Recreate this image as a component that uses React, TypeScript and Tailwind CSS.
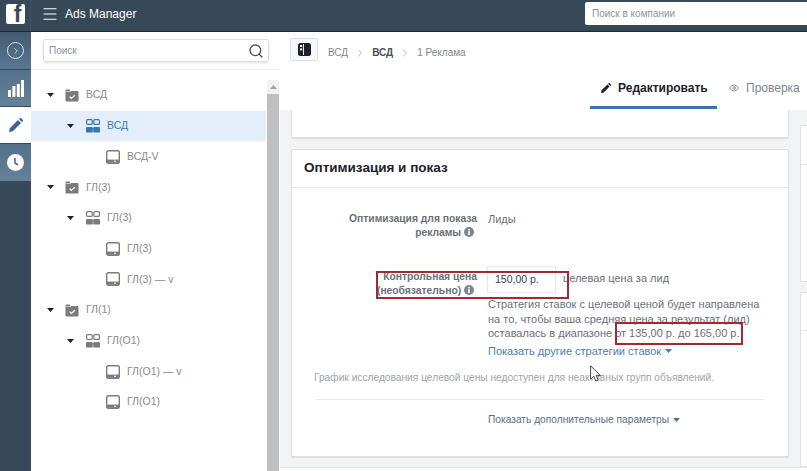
import { Eye, Search, ChevronRight, Menu } from "lucide-react";

const font = "font-['Liberation_Sans',Arial,sans-serif]";

function Caret({ className = "text-[#1d2129]" }: { className?: string }) {
  return (
    <svg width="7" height="4" viewBox="0 0 7 4" className={className}>
      <path d="M0 0h7L3.5 4z" fill="currentColor" />
    </svg>
  );
}

function FolderIcon() {
  return (
    <svg width="14" height="13" viewBox="0 0 14 13">
      <path d="M0.5 1.5a1 1 0 0 1 1-1h3l1 1.6h7a1 1 0 0 1 1 1v8.4a1 1 0 0 1-1 1h-11a1 1 0 0 1-1-1z" fill="#7b7b7b" />
      <path d="M1 2.9h5v-.6H1z" fill="#fff" />
      <path d="M4.6 7.6l1.8 1.8 3.4-3.2" stroke="#fff" strokeWidth="1.3" fill="none" />
    </svg>
  );
}

function SetIcon({ color }: { color: string }) {
  return (
    <svg width="14" height="14" viewBox="0 0 14 14" style={{ color }}>
      <rect x="0.6" y="0.6" width="5.6" height="4.8" rx="1" fill="none" stroke="currentColor" strokeWidth="1.2" />
      <rect x="7.8" y="0.6" width="5.6" height="4.8" rx="1" fill="none" stroke="currentColor" strokeWidth="1.2" />
      <rect x="0" y="8" width="6.8" height="5.6" rx="1.2" fill="currentColor" />
      <rect x="7.2" y="8" width="6.8" height="5.6" rx="1.2" fill="currentColor" />
    </svg>
  );
}

function AdIcon() {
  return (
    <svg width="14" height="14" viewBox="0 0 14 14">
      <rect x="0.7" y="0.7" width="12.6" height="12.6" rx="1.6" fill="none" stroke="#7b7b7b" strokeWidth="1.4" />
      <rect x="1" y="9.6" width="12" height="3.2" fill="#7b7b7b" />
      <rect x="8" y="10.7" width="2" height="1" fill="#fff" />
    </svg>
  );
}

function InfoDot() {
  return (
    <svg width="10" height="10" viewBox="0 0 10 10" className="mr-[3px] inline align-[-1px]">
      <circle cx="5" cy="5" r="5" fill="#7f858d" />
      <rect x="4.2" y="4.2" width="1.6" height="3.8" fill="#fff" />
      <rect x="4.2" y="2" width="1.6" height="1.5" fill="#fff" />
    </svg>
  );
}

function PencilGlyph({ size, color }: { size: number; color: string }) {
  return (
    <svg width={size} height={size} viewBox="0 0 14 14">
      <path d="M0 14l.8-3.8 8.2-8.2 3 3-8.2 8.2zM9.9 1.1l.7-.7a1.3 1.3 0 0 1 1.8 0l1.2 1.2a1.3 1.3 0 0 1 0 1.8l-.7.7z" fill={color} />
    </svg>
  );
}

type Row = { level: 0 | 1 | 2; label: string; active?: boolean };

const rows: Row[] = [
  { level: 0, label: "ВСД" },
  { level: 1, label: "ВСД", active: true },
  { level: 2, label: "ВСД-V" },
  { level: 0, label: "ГЛ(3)" },
  { level: 1, label: "ГЛ(3)" },
  { level: 2, label: "ГЛ(3)" },
  { level: 2, label: "ГЛ(3) — v" },
  { level: 0, label: "ГЛ(1)" },
  { level: 1, label: "ГЛ(О1)" },
  { level: 2, label: "ГЛ(О1) — v" },
  { level: 2, label: "ГЛ(О1)" },
];

function TreeRow({ row }: { row: Row }) {
  const pad = row.level === 0 ? "pl-[16px]" : row.level === 1 ? "pl-[36px]" : "pl-[75px]";
  return (
    <div className={`flex h-[30.7px] items-center ${pad} ${row.active ? "bg-[#e3eefa] text-[#3b7ab8]" : "text-[#8a8a8a]"}`}>
      {row.level < 2 && <Caret />}
      <span className={row.level === 2 ? "" : row.level === 0 ? "ml-[11px]" : "ml-[12px]"}>
        {row.level === 0 && <FolderIcon />}
        {row.level === 1 && <SetIcon color={row.active ? "#2f77b5" : "#7b7b7b"} />}
        {row.level === 2 && <AdIcon />}
      </span>
      <span className="ml-[7px] text-[10.5px]">{row.label}</span>
    </div>
  );
}

function Sidebar() {
  return (
    <div className="flex w-[31px] shrink-0 flex-col bg-[#374858]">
      <div className="flex h-[37px] items-center justify-center bg-gradient-to-b from-[#435b72] to-[#5a7793]">
        <div className="flex h-[17px] w-[17px] items-center justify-center rounded-full border border-white/80">
          <ChevronRight size={10} className="text-white/80" />
        </div>
      </div>
      <div className="flex h-[38px] items-center justify-center border-y border-[#374858] bg-gradient-to-b from-[#54708b] to-[#658299]">
        <svg width="16" height="17" viewBox="0 0 16 17">
          <rect x="0" y="10" width="3" height="7" fill="#fff" />
          <rect x="4.4" y="6" width="3" height="11" fill="#fff" />
          <rect x="8.8" y="4" width="3" height="13" fill="#fff" />
          <rect x="13" y="0" width="3" height="17" fill="#fff" />
        </svg>
      </div>
      <div className="flex h-[36px] items-center justify-center bg-white">
        <PencilGlyph size={14} color="#3b62a0" />
      </div>
      <div className="flex h-[38px] items-center justify-center border-t border-[#374858] bg-gradient-to-b from-[#54708b] to-[#658299]">
        <svg width="17" height="17" viewBox="0 0 17 17">
          <circle cx="8.5" cy="8.5" r="8.5" fill="#fff" />
          <path d="M8 4v5l3 2" stroke="#4f6a85" strokeWidth="1.6" fill="none" />
        </svg>
      </div>
    </div>
  );
}

export default function App() {
  return (
    <div className={`${font} flex h-[471px] w-[807px] flex-col overflow-hidden bg-white`}>
      <header className="flex h-[32px] shrink-0 items-center border-b border-[#1f2a35] bg-[#374858] pb-[4px]">
        <div className="-mb-[4px] flex w-[31px] items-center justify-center self-stretch border-r border-[#42525f] pb-[4px]">
          <div className="flex h-[20px] w-[19px] items-start justify-end rounded-[2px] bg-white pr-[3px] pt-[1px]">
            <span className="text-[23px] font-bold leading-[19px] text-[#374858]">f</span>
          </div>
        </div>
        <Menu size={18} strokeWidth={1.5} className="ml-[10px] text-white" />
        <span className="ml-[6px] text-[12px] text-white">Ads Manager</span>
        <div className="ml-auto flex h-[23px] w-[222px] items-center rounded-l-[2px] bg-white pl-[7px] text-[10px] text-[#8d949e]">
          Поиск в компании
        </div>
      </header>

      <div className="flex min-h-0 flex-1">
        <Sidebar />

        <aside className="flex w-[249px] shrink-0 flex-col">
          <div className="flex h-[38px] shrink-0 items-center border-b border-[#eceef0] pl-[12px] pr-[11px]">
            <div className="flex h-[23px] flex-1 items-center justify-between rounded-[2px] border border-[#dddfe2] pl-[5px] pr-[4px] text-[10px] text-[#8d949e] shadow-sm">
              Поиск
              <Search size={16} className="text-[#4b4f56]" />
            </div>
          </div>
          <div className="flex min-h-0 flex-1">
            <div className="w-[235px] pt-[10px]">
              {rows.map((row, i) => (
                <TreeRow key={i} row={row} />
              ))}
            </div>
            <div className="ml-[1px] mt-[10px] flex w-[12px] flex-col">
              <div className="flex h-[14px] items-center justify-center bg-[#f1f1f1]">
                <svg width="7" height="4" viewBox="0 0 7 4"><path d="M3.5 0L7 4H0z" fill="#a3a3a3" /></svg>
              </div>
              <div className="flex-1 bg-[#bfbfbf]" />
            </div>
          </div>
        </aside>

        <main className="flex min-w-0 flex-1 flex-col">
          <div className="flex h-[78px] shrink-0 flex-col">
            <div className="flex h-[46px] items-start pl-[10px] pt-[6px]">
              <div className="flex h-[23px] w-[28px] items-center justify-center rounded-[2px] border border-[#dddfe2] bg-[#f6f7f9]">
                <svg width="13" height="13" viewBox="0 0 13 13">
                  <rect x="0" y="0" width="13" height="13" rx="2.5" fill="#1d2129" />
                  <rect x="2" y="2" width="2.2" height="2" fill="#fff" />
                  <rect x="2" y="5.4" width="2.2" height="2" fill="#fff" />
                  <rect x="5" y="1" width="0.9" height="11" fill="#fff" />
                </svg>
              </div>
              <div className="ml-[10px] mt-[7px] flex items-center gap-[6px] text-[10px] text-[#7f858d]">
                <span>ВСД</span>
                <ChevronRight size={12} strokeWidth={1.2} />
                <span className="font-bold text-[#4b4f56]">ВСД</span>
                <ChevronRight size={12} strokeWidth={1.2} />
                <span>1 Реклама</span>
              </div>
            </div>
            <div className="flex flex-1 justify-end">
              <div className="flex h-[31px] w-[127px] items-center gap-[7px] border-b-[3px] border-[#3e72ae] pb-[8px] pl-[11px] text-[12px] font-bold text-[#1d2129]">
                <PencilGlyph size={10} color="#1d2129" />
                Редактировать
              </div>
              <div className="flex h-[31px] w-[90px] items-center gap-[7px] pb-[11px] pl-[12px] text-[12px] text-[#7f858d]">
                <Eye size={10} className="shrink-0" />
                Проверка
              </div>
            </div>
          </div>

          <div className="flex min-h-0 flex-1 bg-[#f2f3f5] pl-[11px]">
            <div className="flex w-[498px] shrink-0 flex-col gap-[10px]">
              <div className="h-[29px] shrink-0 rounded-b-[2px] border border-t-0 border-b-2 border-[#dddfe2] bg-white" />
              <section className="relative h-[309px] rounded-[2px] border border-b-2 border-[#dddfe2] bg-white">
                <div className="flex h-[38px] items-center border-b border-[#e5e6e9] pl-[12px] text-[13.5px] font-bold text-[#1d2129]">
                  Оптимизация и показ
                </div>
                <div className="text-[11px] leading-[14.5px] text-[#6b7078]">
                  <div className="grid grid-cols-[185px_1fr] gap-x-[11px] pt-[24px]">
                    <div className="pl-[50px] text-right text-[10.3px] font-bold leading-[14px]">
                      Оптимизация для показа рекламы <InfoDot />
                    </div>
                    <div>Лиды</div>
                  </div>

                  <div className="relative mt-[26px] grid grid-cols-[185px_1fr] gap-x-[11px]">
                    <div className="pl-[50px] pt-[4px] text-right text-[10.3px] font-bold leading-[13.5px]">
                      Контрольная цена (необязательно) <InfoDot />
                    </div>
                    <div>
                      <div className="flex items-center gap-[7px]">
                        <div className="-ml-[1px] flex h-[27px] w-[69px] items-center border border-[#e5e6e9] pl-[7px] text-[10.5px] text-[#3d4147]">150,00 р.</div>
                        <span className="-mt-[3px]">целевая цена за лид</span>
                      </div>
                      <p className="mt-[4px] w-[282px]">
                        Стратегия ставок с целевой ценой будет направлена на то, чтобы ваша средняя цена за результат (лид) оставалась в диапазоне{" "}
                        <span className="relative">
                          от 135,00 р. до 165,00 р.
                          <span className="pointer-events-none absolute -bottom-[6px] left-0 -right-[3px] -top-[5px] border-2 border-[#a02a30]" />
                        </span>
                      </p>
                      <div className="mt-[3.5px] flex items-center gap-[4px] text-[#4a7fb0]">
                        Показать другие стратегии ставок
                        <Caret className="text-[#4a7fb0]" />
                      </div>
                    </div>
                    <span className="pointer-events-none absolute left-[84px] top-[5px] h-[28px] w-[193px] border-2 border-[#a02a30]" />
                  </div>

                  <p className="mt-[12px] pl-[22px] text-[10.2px] text-[#a0a4a9]">
                    График исследования целевой цены недоступен для неактивных групп объявлений.
                  </p>
                  <div className="ml-[24px] mr-[24px] mt-[13.5px] border-t border-[#e9eaed]" />
                  <div className="mt-[13.5px] flex items-center gap-[4px] pl-[196px] text-[10.2px] text-[#5a6f8a]">
                    Показать дополнительные параметры
                    <Caret className="text-[#5a6f8a]" />
                  </div>
                </div>
                <svg width="11" height="17" viewBox="0 0 11 17" className="pointer-events-none absolute left-[298px] top-[215px]">
                  <path d="M0.6 0.8v13.4l3.2-3 2 4.8 2.4-1-2-4.6h4.2z" fill="#fff" stroke="#333" strokeWidth="0.9" />
                </svg>
              </section>
            </div>
            <div className="ml-[11px] flex flex-1 flex-col gap-[10px] pt-[15px]">
              <div className="h-[157px] rounded-tl-[2px] rounded-bl-[2px] border border-r-0 border-[#dddfe2] bg-white pt-[38px]">
                <div className="border-t border-[#e5e6e9]" />
              </div>
              <div className="h-[175px] rounded-tl-[2px] border border-r-0 border-[#dddfe2] bg-white pt-[37px]">
                <div className="border-t border-[#e5e6e9]" />
              </div>
            </div>
          </div>
          <div className="h-[4px] shrink-0 border-t border-[#e5e6e9] bg-white" />
        </main>
      </div>
    </div>
  );
}
